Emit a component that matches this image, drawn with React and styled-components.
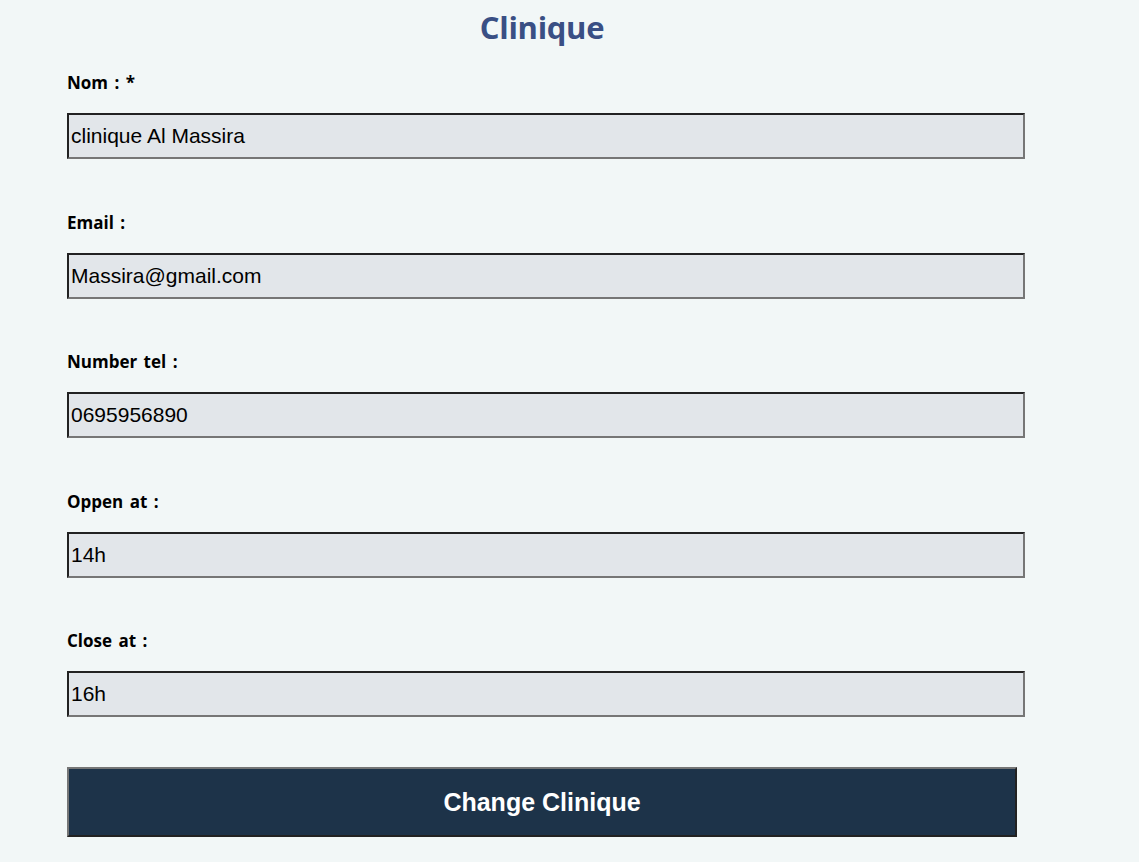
import React from 'react'
import styled, { createGlobalStyle } from 'styled-components'

const GlobalStyle = createGlobalStyle`
  body {
    margin: 0;
    background: #f2f7f7;
    font-family: "Open Sans", "Liberation Sans", sans-serif;
  }
`

const Page = styled.div`
  width: 950px;
  margin-left: 67px;
  padding-top: 6px;
`

const Title = styled.h2`
  margin: 0 0 23px;
  text-align: center;
  font-size: 31px;
  font-weight: 700;
  color: #3a4f84;
  letter-spacing: -0.3px;
`

const Form = styled.form`
  display: flex;
  flex-direction: column;
`

const Field = styled.div`
  display: flex;
  flex-direction: column;
  margin-bottom: 51.5px;
`

const Label = styled.label`
  font-size: 17px;
  font-weight: 700;
  color: #000;
  margin-bottom: 19px;
  word-spacing: 2px;
`

const Input = styled.input`
  box-sizing: content-box;
  width: 100%;
  height: 38px;
  padding: 2px;
  border: 2px solid;
  border-color: #222 #767676 #767676 #222;
  background: #e2e6ea;
  font-family: "Liberation Sans", Arial, sans-serif;
  font-size: 21px;
  color: #000;
  outline: none;
`

const Button = styled.button`
  box-sizing: border-box;
  width: 950px;
  height: 70px;
  margin-top: -1.5px;
  background: #1d3349;
  border: 2px solid;
  border-color: #767676 #222 #222 #767676;
  color: #fff;
  font-family: "Liberation Sans", Arial, sans-serif;
  font-size: 25px;
  font-weight: 700;
  cursor: pointer;
`

const fields = [
  { label: 'Nom : *', value: 'clinique Al Massira' },
  { label: 'Email :', value: 'Massira@gmail.com' },
  { label: 'Number tel :', value: '0695956890' },
  { label: 'Oppen at :', value: '14h' },
  { label: 'Close at :', value: '16h' },
]

function App() {
  return (
    <>
      <GlobalStyle />
      <Page>
        <Title>Clinique</Title>
        <Form onSubmit={e => e.preventDefault()}>
          {fields.map(f => (
            <Field key={f.label}>
              <Label>{f.label}</Label>
              <Input defaultValue={f.value} />
            </Field>
          ))}
        </Form>
        <Button type="button">Change Clinique</Button>
      </Page>
    </>
  )
}

export default App
